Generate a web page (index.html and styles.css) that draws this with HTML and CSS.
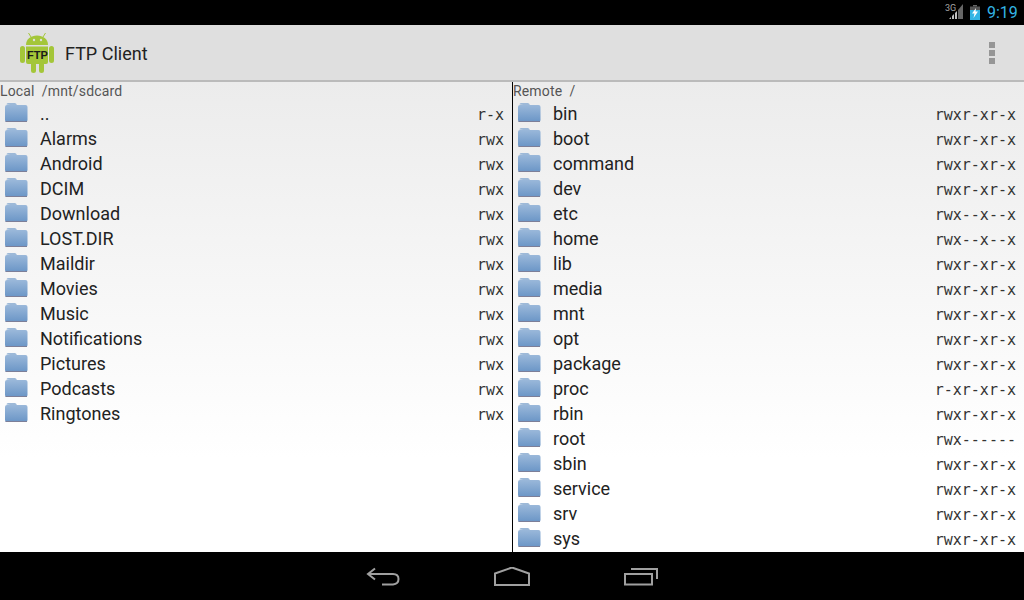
FILE: index.html
```html
<!DOCTYPE html>
<html>
<head>
<meta charset="utf-8">
<title>FTP Client</title>
<link rel="stylesheet" href="styles.css">
</head>
<body>
<svg class="defs" width="0" height="0"><defs>
<linearGradient id="fg" x1="0" y1="0" x2="0" y2="1"><stop offset="0" stop-color="#9ab8da"/><stop offset="1" stop-color="#6a95c6"/></linearGradient>
<symbol id="folder" viewBox="0 0 24 21">
<path d="M2.500 2.500Q2.500 1 4 1H11Q12.500 1 13 3.500H10Z" fill="#9db9d8"/>
<path d="M1 5Q1 3 3 3H21.500Q23.500 3 23.500 5V18Q23.500 20 21.500 20H3Q1 20 1 18Z" fill="url(#fg)"/>
<path d="M1.500 19.500H23" stroke="#7d7f98" stroke-width="1"/>
</symbol>
</defs></svg>
<header class="status">
<svg class="signal" width="18" height="16" viewBox="0 0 18 16"><text x="0" y="6.500" class="g3">3G</text><path d="M4 15H6V13L4 15ZM7 15H9V10L7 12ZM10 15H12V7L10 9Z" fill="#c0c0c0"/><path d="M13 15H18V0L13 6Z" fill="#666"/></svg>
<svg class="battery" width="10" height="15" viewBox="0 0 10 15"><rect x="3" width="4" height="1.500" fill="#666"/><rect y="1.500" width="10" height="4" fill="#555"/><rect y="5" width="10" height="10" fill="#33b5e5"/><path d="M6 3L2 8.500H4.500L3.500 13L8 6.500H5.500Z" fill="#fff"/></svg>
<span class="clock">9:19</span>
</header>
<header class="action">
<svg class="logo" width="34" height="40" viewBox="0 0 34 40">
<g fill="#a4c639">
<rect x="0" y="13" width="5" height="17" rx="2.500"/>
<rect x="29" y="13" width="5" height="17" rx="2.500"/>
<rect x="11" y="29" width="5" height="11" rx="2.500"/>
<rect x="19" y="29" width="5" height="11" rx="2.500"/>
<path d="M6 12C6 6 11 2.500 17 2.500S28 6 28 12Z"/>
<path d="M6 13.500H28V29Q28 31 26 31H8Q6 31 6 29Z"/>
</g>
<path d="M11 4L8.500 0M23 4L25.500 0" stroke="#a4c639" stroke-width="1"/>
<circle cx="14" cy="7" r="1.200" fill="#dfdfdf"/><circle cx="21" cy="7" r="1.200" fill="#dfdfdf"/>
<text x="17.500" y="25.500" class="ftp">FTP</text>
</svg>
<h1 class="title">FTP Client</h1>
<span class="overflow"><i></i><i></i><i></i></span>
</header>
<main class="panes">
<section class="pane local">
<div class="path">Local&nbsp;&nbsp;/mnt/sdcard</div>
<ul class="list">
<li class="row"><svg class="folder"><use href="#folder"/></svg><span class="name">..</span><span class="perm">r-x</span></li>
<li class="row"><svg class="folder"><use href="#folder"/></svg><span class="name">Alarms</span><span class="perm">rwx</span></li>
<li class="row"><svg class="folder"><use href="#folder"/></svg><span class="name">Android</span><span class="perm">rwx</span></li>
<li class="row"><svg class="folder"><use href="#folder"/></svg><span class="name">DCIM</span><span class="perm">rwx</span></li>
<li class="row"><svg class="folder"><use href="#folder"/></svg><span class="name">Download</span><span class="perm">rwx</span></li>
<li class="row"><svg class="folder"><use href="#folder"/></svg><span class="name">LOST.DIR</span><span class="perm">rwx</span></li>
<li class="row"><svg class="folder"><use href="#folder"/></svg><span class="name">Maildir</span><span class="perm">rwx</span></li>
<li class="row"><svg class="folder"><use href="#folder"/></svg><span class="name">Movies</span><span class="perm">rwx</span></li>
<li class="row"><svg class="folder"><use href="#folder"/></svg><span class="name">Music</span><span class="perm">rwx</span></li>
<li class="row"><svg class="folder"><use href="#folder"/></svg><span class="name">Notifications</span><span class="perm">rwx</span></li>
<li class="row"><svg class="folder"><use href="#folder"/></svg><span class="name">Pictures</span><span class="perm">rwx</span></li>
<li class="row"><svg class="folder"><use href="#folder"/></svg><span class="name">Podcasts</span><span class="perm">rwx</span></li>
<li class="row"><svg class="folder"><use href="#folder"/></svg><span class="name">Ringtones</span><span class="perm">rwx</span></li>
</ul>
</section>
<section class="pane remote">
<div class="path">Remote&nbsp;&nbsp;/</div>
<ul class="list">
<li class="row"><svg class="folder"><use href="#folder"/></svg><span class="name">bin</span><span class="perm">rwxr-xr-x</span></li>
<li class="row"><svg class="folder"><use href="#folder"/></svg><span class="name">boot</span><span class="perm">rwxr-xr-x</span></li>
<li class="row"><svg class="folder"><use href="#folder"/></svg><span class="name">command</span><span class="perm">rwxr-xr-x</span></li>
<li class="row"><svg class="folder"><use href="#folder"/></svg><span class="name">dev</span><span class="perm">rwxr-xr-x</span></li>
<li class="row"><svg class="folder"><use href="#folder"/></svg><span class="name">etc</span><span class="perm">rwx--x--x</span></li>
<li class="row"><svg class="folder"><use href="#folder"/></svg><span class="name">home</span><span class="perm">rwx--x--x</span></li>
<li class="row"><svg class="folder"><use href="#folder"/></svg><span class="name">lib</span><span class="perm">rwxr-xr-x</span></li>
<li class="row"><svg class="folder"><use href="#folder"/></svg><span class="name">media</span><span class="perm">rwxr-xr-x</span></li>
<li class="row"><svg class="folder"><use href="#folder"/></svg><span class="name">mnt</span><span class="perm">rwxr-xr-x</span></li>
<li class="row"><svg class="folder"><use href="#folder"/></svg><span class="name">opt</span><span class="perm">rwxr-xr-x</span></li>
<li class="row"><svg class="folder"><use href="#folder"/></svg><span class="name">package</span><span class="perm">rwxr-xr-x</span></li>
<li class="row"><svg class="folder"><use href="#folder"/></svg><span class="name">proc</span><span class="perm">r-xr-xr-x</span></li>
<li class="row"><svg class="folder"><use href="#folder"/></svg><span class="name">rbin</span><span class="perm">rwxr-xr-x</span></li>
<li class="row"><svg class="folder"><use href="#folder"/></svg><span class="name">root</span><span class="perm">rwx------</span></li>
<li class="row"><svg class="folder"><use href="#folder"/></svg><span class="name">sbin</span><span class="perm">rwxr-xr-x</span></li>
<li class="row"><svg class="folder"><use href="#folder"/></svg><span class="name">service</span><span class="perm">rwxr-xr-x</span></li>
<li class="row"><svg class="folder"><use href="#folder"/></svg><span class="name">srv</span><span class="perm">rwxr-xr-x</span></li>
<li class="row"><svg class="folder"><use href="#folder"/></svg><span class="name">sys</span><span class="perm">rwxr-xr-x</span></li>
</ul>
</section>
</main>
<nav class="nav">
<svg class="nav-icon" width="34" height="20" viewBox="0 0 34 20"><path d="M9 1.500L2 7L9 12.500M2 7H27Q32.500 7 32.500 12T27 17.500H16" fill="none" stroke="#a0a0a0" stroke-width="2"/></svg>
<svg class="nav-icon" width="36" height="20" viewBox="0 0 36 20"><path d="M1 6.500L18 .5L35 6.500V18H1Z" fill="none" stroke="#a0a0a0" stroke-width="2"/></svg>
<svg class="nav-icon" width="34" height="20" viewBox="0 0 34 20"><path d="M1 7H28V17.500H1Z" fill="none" stroke="#a0a0a0" stroke-width="2"/><path d="M8 3V2H33V12" fill="none" stroke="#a0a0a0" stroke-width="2"/></svg>
</nav>
</body>
</html>
```
FILE: styles.css
```css
* { box-sizing: border-box; }
html, body { margin: 0; padding: 0; }
body { width: 1024px; height: 600px; overflow: hidden; display: flex; flex-direction: column; font-family: "Roboto", sans-serif; background: #000; }
.defs { position: absolute; }
.status { height: 25px; flex: none; background: #000; display: flex; align-items: center; justify-content: flex-end; padding-right: 6px; }
.signal { margin-right: 7px; margin-top: -1px; }
.battery { margin-right: 7px; margin-top: -1px; }
.g3 { font: 9px "Roboto", sans-serif; fill: #a5a5a5; }
.clock { font-size: 16px; color: #33b5e5; width: 31px; }
.action { height: 57px; flex: none; background: #dfdfdf; border-bottom: 2px solid #bbb; display: flex; align-items: center; padding: 0 29px 0 20px; }
.logo { flex: none; margin-top: 1px; }
.ftp { font: bold 11px "Liberation Sans", sans-serif; text-anchor: middle; fill: #1a1a1a; }
.title { font-size: 18px; font-weight: 400; color: #222; margin: 2px 0 0 11px; flex: 1; }
.overflow { display: flex; flex-direction: column; gap: 2px; }
.overflow i { display: block; width: 6px; height: 6px; background: #969696; }
.panes { flex: 1; min-height: 0; display: flex; background: linear-gradient(#ececec, #fff 80%); color: #222; }
.pane { min-width: 0; overflow: hidden; }
.local { width: 513px; border-right: 1px solid #000; }
.remote { flex: 1; }
.path { height: 19px; font-size: 14px; line-height: 18px; letter-spacing: .15px; color: #555; }
.list { list-style: none; margin: 0; padding: 0; }
.row { height: 25px; display: flex; align-items: center; padding: 0 8px 0 4px; }
.folder { width: 24px; height: 21px; flex: none; margin: -2px 12px 0 0; }
.name { flex: 1; font-size: 18px; color: #222; }
.perm { font: 15px "DejaVu Sans Mono", monospace; color: #333; padding-top: 2px; }
.nav { height: 48px; flex: none; background: #000; display: flex; align-items: center; justify-content: center; gap: 94px; }
.nav-icon { margin-top: 2px; }
```
